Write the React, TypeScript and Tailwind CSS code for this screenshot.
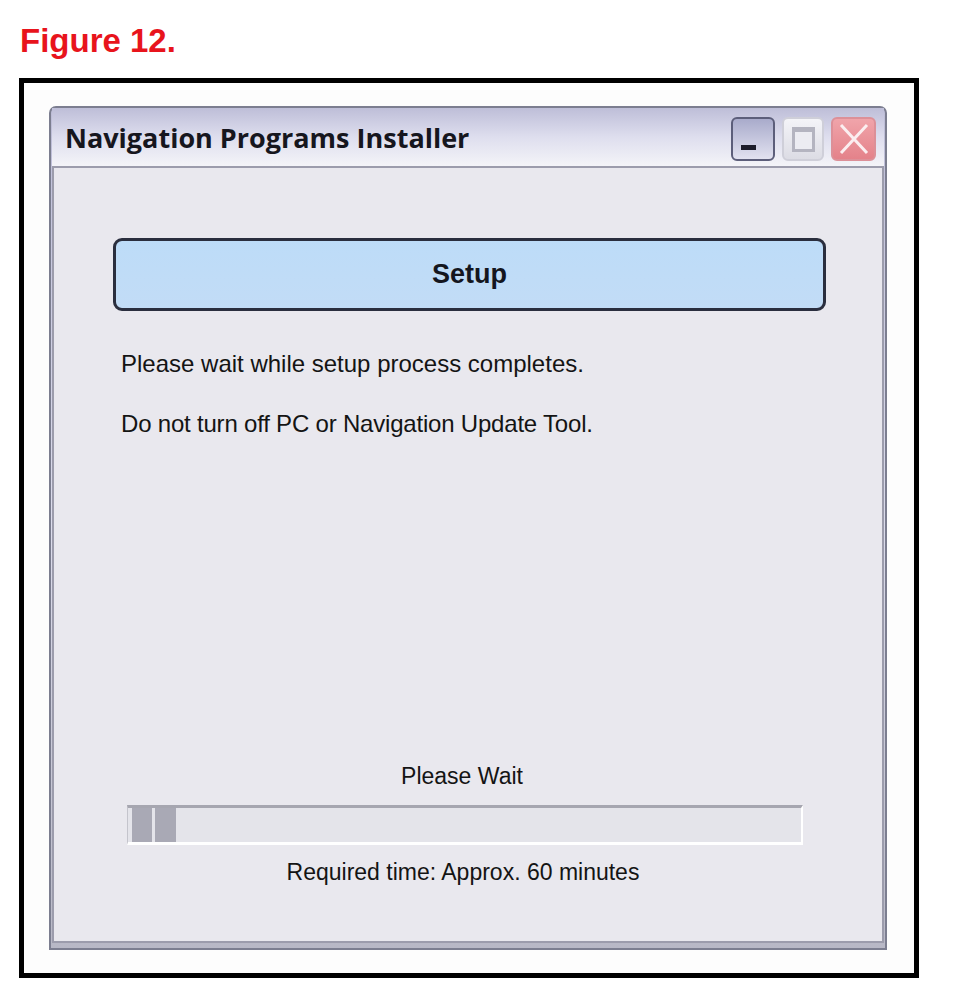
import React from 'react';

const TitleButtons: React.FC = () => {
  return (
    <div className="ml-auto mr-[8px] mt-[9px] flex gap-[7px]">
      {/* minimize */}
      <div className="relative h-[44px] w-[44px] rounded-[6px] border-2 border-[#5c5e7a] bg-gradient-to-b from-[#a9abcb] to-[#e2e2f0]">
        <div className="absolute left-[8px] top-[26px] h-[5px] w-[15px] bg-[#1c1c2a]" />
      </div>
      {/* maximize (disabled) */}
      <div className="flex h-[44px] w-[42px] items-center justify-center rounded-[6px] border-2 border-[#cfcfd9] bg-gradient-to-b from-[#f4f4f8] to-[#dcdce4]">
        <div className="h-[25px] w-[23px] border-[3px] border-t-[5px] border-[#b4b4c0] bg-[#ececf2]" />
      </div>
      {/* close */}
      <div className="flex h-[44px] w-[45px] items-center justify-center rounded-[6px] border-2 border-[#dc9098] bg-gradient-to-b from-[#f0a4aa] to-[#e4828a]">
        <svg width="32" height="32" viewBox="0 0 32 32">
          <path d="M3 2 L29 30 M29 2 L3 30" stroke="#fbeef0" strokeWidth="3" fill="none" />
        </svg>
      </div>
    </div>
  );
};

const App: React.FC = () => {
  return (
    <div className="h-[1001px] w-[954px] bg-white font-['Liberation_Sans',Arial,sans-serif] text-[#141414]">
      <div className="h-[78px] pl-[20px] pt-[24px]">
        <h1 className="text-[33px] font-bold leading-none text-[#e8141c]">Figure 12.</h1>
      </div>

      <div className="ml-[19px] h-[900px] w-[900px] border-[5px] border-black bg-[#fdfdfd] pl-[25px] pt-[23px]">
        {/* window */}
        <div className="flex h-[844px] w-[838px] flex-col rounded-t-[7px] border-2 border-[#7c7e90] bg-gradient-to-b from-[#bdbdd7] via-[#dcdcec] to-[#b8b8c6] px-[1px] pb-[5px]">
          {/* title bar */}
          <div className="flex h-[58px] bg-gradient-to-b from-[#bebed8] via-[#dedeee] to-[#f4f4f8]">
            <div className="pl-[13px] pt-[16px] font-['Open_Sans',sans-serif] text-[27px] font-bold leading-none tracking-[0px] text-[#16161e]">
              Navigation Programs Installer
            </div>
            <TitleButtons />
          </div>

          {/* client area */}
          <div className="flex flex-1 flex-col border-2 border-[#9c9cac] bg-[#e9e8ee]">
            <div className="ml-[59px] mt-[70px] flex h-[73px] w-[713px] items-center justify-center rounded-[9px] border-[3px] border-[#2a2e3e] bg-gradient-to-b from-[#bddcf8] to-[#c2dcf6]">
              <span className="text-[27px] font-bold leading-none text-[#14161e]">Setup</span>
            </div>

            <p className="ml-[67px] mt-[41px] text-[24px] leading-none">
              Please wait while setup process completes.
            </p>
            <p className="ml-[67px] mt-[36px] text-[24px] leading-none tracking-[-0.2px]">
              Do not turn off PC or Navigation Update Tool.
            </p>

            <div className="ml-[73px] mt-[329px] flex w-[676px] flex-col items-center">
              <p className="pr-[6px] text-[23px] leading-none">Please Wait</p>

              <div className="mt-[17px] flex h-[40px] w-full gap-[3px] border-t-[3px] border-b-[3px] border-l border-r-2 border-t-[#a6a6b0] border-b-white border-l-[#c4c4cc] border-r-white bg-[#e4e4ea] pl-[4px]">
                <div className="h-full w-[20px] bg-[#a9a9b5]" />
                <div className="h-full w-[21px] bg-[#a9a9b5]" />
              </div>

              <p className="mt-[16px] pr-[4px] text-[23px] leading-none">
                Required time: Approx. 60 minutes
              </p>
            </div>
          </div>
        </div>
      </div>
    </div>
  );
};

export default App;
